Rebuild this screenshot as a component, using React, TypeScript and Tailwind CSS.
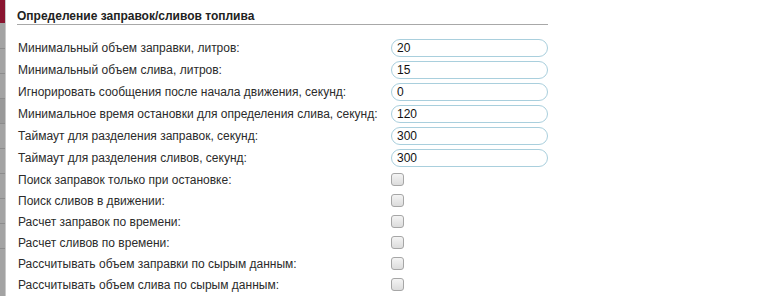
import React from "react";

const numberFields = [
  { label: "Минимальный объем заправки, литров:", value: "20" },
  { label: "Минимальный объем слива, литров:", value: "15" },
  { label: "Игнорировать сообщения после начала движения, секунд:", value: "0" },
  { label: "Минимальное время остановки для определения слива, секунд:", value: "120" },
  { label: "Таймаут для разделения заправок, секунд:", value: "300" },
  { label: "Таймаут для разделения сливов, секунд:", value: "300" },
];

const flagFields = [
  "Поиск заправок только при остановке:",
  "Поиск сливов в движении:",
  "Расчет заправок по времени:",
  "Расчет сливов по времени:",
  "Рассчитывать объем заправки по сырым данным:",
  "Рассчитывать объем слива по сырым данным:",
];

function SideStrip() {
  // collapsed side menu on the left edge
  return (
    <div className="flex flex-col w-[6px] shrink-0 border-r border-[#c9c9c9] bg-[#a3a3a3]">
      <div className="h-[23px] bg-[#8a1530]" />
      <div className="h-[25px]" />
      <div className="h-[25px] border-t border-[#8c8c8c]" />
      <div className="h-[25px] border-t border-[#8c8c8c]" />
      <div className="h-[25px] border-t border-[#8c8c8c] bg-[#999999]" />
      <div className="h-[25px] border-t border-[#8c8c8c]" />
      <div className="h-[25px] border-t border-[#8c8c8c]" />
      <div className="h-[25px] border-t border-[#8c8c8c]" />
      <div className="h-[25px] border-t border-[#8c8c8c]" />
      <div className="h-[25px] border-t border-[#8c8c8c]" />
      <div className="flex-1 border-t border-[#8c8c8c]" />
    </div>
  );
}

export default function App() {
  return (
    <div
      className="flex h-[296px] w-[778px] bg-white text-[12px] text-[#2b2b2b] overflow-hidden"
      style={{ fontFamily: '"Liberation Sans", Arial, sans-serif' }}
    >
      <SideStrip />
      <div className="flex flex-col w-[531px] ml-[11px]">
        {/* Section header */}
        <div className="pt-[9px] pb-[1px] border-b border-[#a8a8a8] leading-[14px] font-bold text-[#222]">
          Определение заправок/сливов топлива
        </div>

        <div className="mt-[12px] flex flex-col">
          {numberFields.map((f) => (
            <div key={f.label} className="flex items-center h-[22px]">
              <span className="w-[374px] pl-[1px] leading-[14px]">{f.label}</span>
              <input
                readOnly
                value={f.value}
                className="h-[18px] w-[157px] rounded-full border border-[#a9cfdd] bg-white px-[5px] text-[12px] leading-[16px] text-[#111] outline-none"
                style={{ fontFamily: '"Liberation Sans", Arial, sans-serif' }}
              />
            </div>
          ))}
          {flagFields.map((label) => (
            <div key={label} className="flex items-center h-[21px]">
              <span className="w-[374px] pl-[1px] leading-[14px]">{label}</span>
              <div className="w-[13px] h-[13px] rounded-[3px] border border-[#a6a6a6] bg-gradient-to-b from-[#f4f4f4] to-[#dcdcdc]" />
            </div>
          ))}
        </div>
      </div>
    </div>
  );
}
